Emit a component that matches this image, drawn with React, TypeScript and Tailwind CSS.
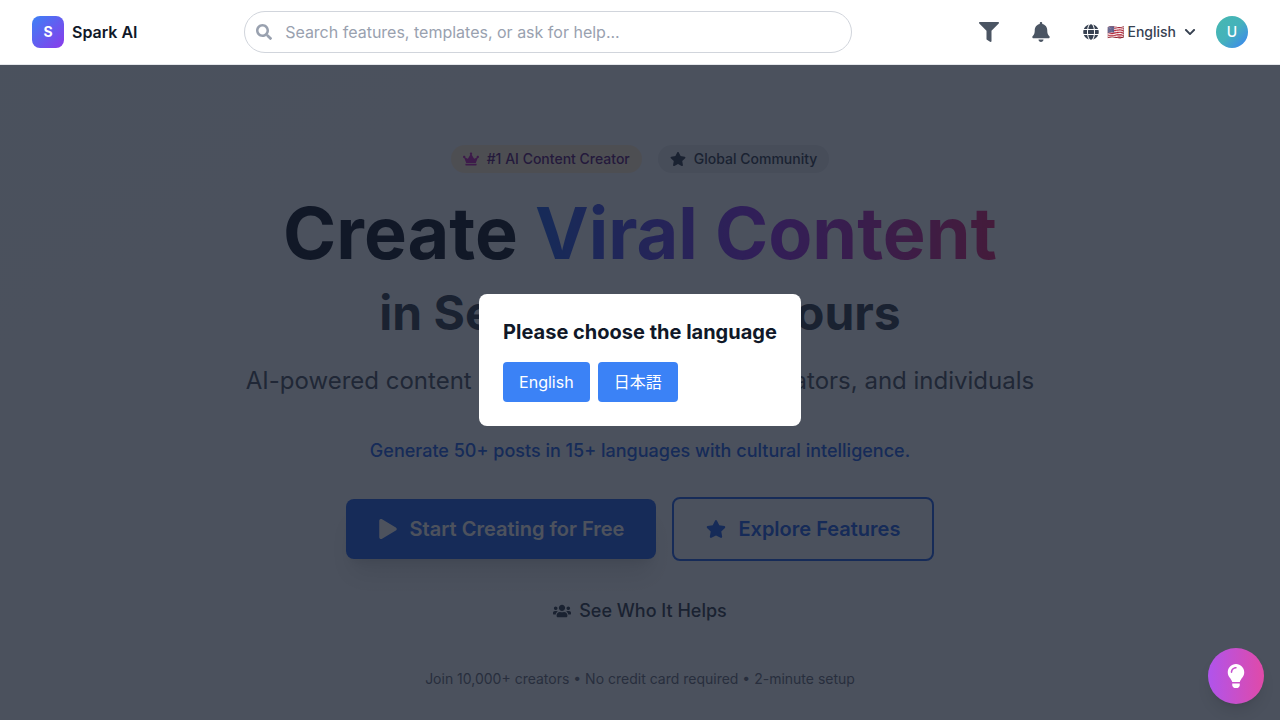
import { useState } from 'react';
import {
  FaBell,
  FaChevronDown,
  FaCrown,
  FaFilter,
  FaGlobe,
  FaLightbulb,
  FaPlay,
  FaSearch,
  FaStar,
  FaUsers,
} from 'react-icons/fa';

function Header() {
  return (
    <header className="sticky top-0 z-50 flex h-[65px] items-center justify-between border-b border-gray-200 bg-white px-8">
      <a href="/" className="flex items-center gap-2">
        <span className="flex h-8 w-8 items-center justify-center rounded-lg bg-linear-to-br/srgb from-[#3b82f6] to-[#8b3aea] text-sm font-bold text-white">
          S
        </span>
        <span className="font-semibold text-gray-900">Spark AI</span>
      </a>

      {/* Search */}
      <div className="w-full max-w-2xl px-8">
        <label className="relative block">
          <span className="absolute inset-y-0 left-3 flex items-center text-gray-400">
            <FaSearch className="h-4 w-4" />
          </span>
          <input
            type="search"
            aria-label="Search"
            placeholder="Search features, templates, or ask for help..."
            className="block w-full rounded-full border border-gray-300 bg-white py-2 pr-4 pl-10 text-base text-gray-900 placeholder-gray-400 outline-none"
          />
        </label>
      </div>

      <div className="flex items-center gap-3 pl-3">
        <div className="flex items-center gap-4">
          <button aria-label="Filter" className="p-2 text-[#4b5563]">
            <FaFilter className="h-5 w-5" />
          </button>
          <button aria-label="Notifications" className="p-2 text-[#4b5563]">
            <FaBell className="h-5 w-5" />
          </button>
          <button className="flex items-center gap-2 p-2 text-sm font-medium text-[#374151]">
            <FaGlobe className="h-4 w-4" />
            <span>🇺🇸 English</span>
            <FaChevronDown className="h-3 w-3" />
          </button>
        </div>
        <button
          aria-label="Account"
          className="flex h-8 w-8 items-center justify-center rounded-full bg-linear-to-br/srgb from-[#46b8b0] via-[#45b2bb] to-[#3b82f6] text-sm font-medium text-white"
        >
          U
        </button>
      </div>
    </header>
  );
}

function Hero() {
  return (
    <section className="flex flex-col items-center px-8 pt-20 pb-8 text-center">
      <div className="flex items-center gap-4">
        <span className="flex items-center gap-2 rounded-full bg-orange-100 px-3 py-1 text-sm font-medium text-[#5b217a]">
          <FaCrown className="h-4 w-4 text-[#c026b3]" />
          #1 AI Content Creator
        </span>
        <span className="flex items-center gap-2 rounded-full bg-[#e5e9ef] px-3 py-1 text-sm font-medium text-[#374151]">
          <FaStar className="h-4 w-4" />
          Global Community
        </span>
      </div>

      <h1 className="mt-6 font-bold">
        <span className="block text-7xl text-gray-900">
          Create{' '}
          <span className="bg-linear-to-r/srgb from-[#2563eb] via-[#9333ea] to-[#db2777] bg-clip-text text-transparent">
            Viral Content
          </span>
        </span>
        <span className="mt-5 block text-5xl text-[#374151]">in Seconds, Not Hours</span>
      </h1>

      <p className="mt-7 text-2xl text-[#4b5563]">
        AI-powered content creation for businesses, creators, and individuals
      </p>
      <p className="mt-10 text-lg font-medium text-[#2563eb]">
        Generate 50+ posts in 15+ languages with cultural intelligence.
      </p>

      <div className="mt-8 flex items-center gap-4">
        <button className="flex items-center gap-3 rounded-lg bg-[#2563eb] px-8 py-4 text-xl font-semibold text-white shadow-xl">
          <FaPlay className="h-5 w-5" />
          Start Creating for Free
        </button>
        <button className="flex items-center gap-3 rounded-lg border-2 border-[#2563eb] px-8 py-4 text-xl font-semibold text-[#2563eb]">
          <FaStar className="h-5 w-5" />
          Explore Features
        </button>
      </div>

      <a href="#audience" className="mt-8 flex items-center gap-2 py-1 text-lg font-medium text-[#374151]">
        <FaUsers className="h-[18px] w-[18px]" />
        See Who It Helps
      </a>
      <p className="mt-10 text-sm text-[#6b7280]">
        Join 10,000+ creators • No credit card required • 2-minute setup
      </p>
    </section>
  );
}

function LanguageDialog({ onChoose }: { onChoose: () => void }) {
  return (
    <div className="fixed inset-0 z-40 flex items-center justify-center bg-[#111827]/75">
      <div role="dialog" aria-labelledby="language-title" className="rounded-lg bg-white p-6">
        <h2 id="language-title" className="mb-4 text-xl font-bold text-gray-900">
          Please choose the language
        </h2>
        <div className="flex gap-2">
          <button onClick={onChoose} className="rounded bg-[#3b82f6] px-4 py-2 text-white">
            English
          </button>
          <button onClick={onChoose} className="rounded bg-[#3b82f6] px-4 py-2 text-white">
            日本語
          </button>
        </div>
      </div>
    </div>
  );
}

export default function App() {
  const [open, setOpen] = useState(true);

  return (
    <div className="min-h-screen bg-linear-to-br/srgb from-[#f4f9fe] to-[#f8fbfe] font-['Inter','Noto_Sans_CJK_JP',sans-serif]">
      <Header />
      <Hero />
      {open && <LanguageDialog onChoose={() => setOpen(false)} />}

      {/* Tips button */}
      <button
        aria-label="Tips"
        className="fixed right-4 bottom-4 z-50 flex h-14 w-14 items-center justify-center rounded-full bg-linear-to-r/srgb from-[#b054ec] to-[#e04aa8] text-white shadow-lg"
      >
        <FaLightbulb className="h-6 w-6" />
      </button>
    </div>
  );
}
